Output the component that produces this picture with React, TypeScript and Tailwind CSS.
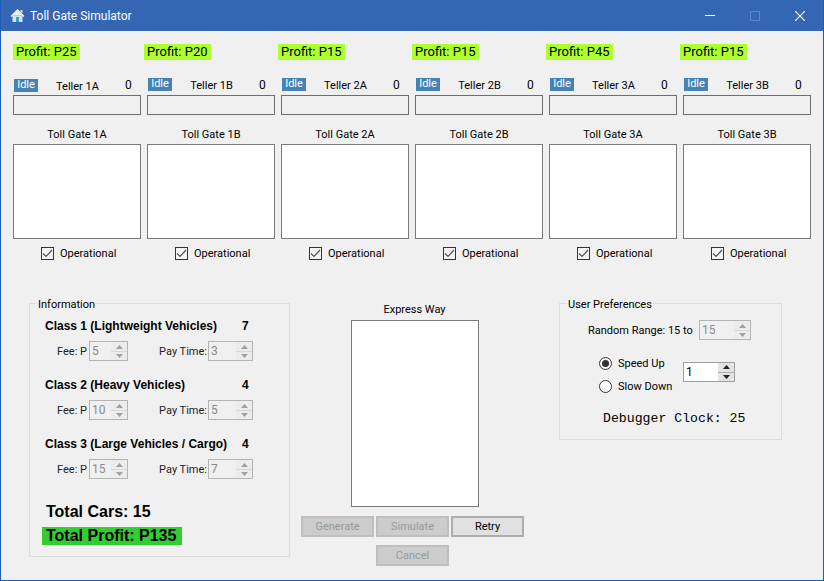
import React from "react";

const ui = "font-['Roboto','Noto_Sans',sans-serif]";

function Spinner({ value, width, enabled = false }: { value: string; width: string; enabled?: boolean }) {
  return (
    <div className={`flex h-[20px] ${width} border ${enabled ? "border-[#a0a0a0] bg-white text-black" : "border-[#b4b4b4] bg-[#f0f0f0] text-[#8a8a8a]"} text-[12px] leading-[18px]`}>
      <div className="flex-1 pl-[2px]">{value}</div>
      <div className="flex w-[16px] flex-col">
        <div className={`flex h-[9px] items-center justify-center ${enabled ? "bg-[#e4e4e4]" : "bg-[#ececec]"}`}>
          <svg width="7" height="4" viewBox="0 0 7 4"><path d="M3.5 0L7 4H0z" fill={enabled ? "#222" : "#a0a0a0"} /></svg>
        </div>
        <div className={`h-[1px] ${enabled ? "bg-[#b0b0b0]" : "bg-[#d8d8d8]"}`} />
        <div className={`flex h-[8px] items-center justify-center ${enabled ? "bg-[#e4e4e4]" : "bg-[#ececec]"}`}>
          <svg width="7" height="4" viewBox="0 0 7 4"><path d="M0 0H7L3.5 4z" fill={enabled ? "#222" : "#a0a0a0"} /></svg>
        </div>
      </div>
    </div>
  );
}

function Gate({ name, teller, profit, offset }: { name: string; teller: string; profit: string; offset: boolean }) {
  return (
    <div className="flex w-[128px] flex-col">
      <div className={`flex h-[16px] w-[67px] items-center whitespace-nowrap bg-[#adff2f] pl-[3px] text-[13px] text-black ${offset ? "ml-[-3px]" : ""}`}>
        Profit: {profit}
      </div>
      <div className={`flex h-[17px] items-center ${offset ? "mt-[18px]" : "mt-[19px]"}`}>
        <div className="ml-[1px] -mt-[4px] flex h-[13px] w-[24px] items-center justify-center bg-[#4682b4] text-[11px] text-white">Idle</div>
        <div className="flex-1 pr-[8px] text-center text-[11px] text-black">{teller}</div>
        <div className={`w-[16px] text-[12px] text-black ${offset ? "-mt-[4px]" : "-mt-[6px]"}`}>0</div>
      </div>
      <div className={`h-[20px] border border-[#6e6e6e] ${offset ? "mt-[0px]" : "mt-[-1px]"}`} />
      <div className="mt-[12px] text-center text-[11px] leading-[16px] text-black">{name}</div>
      <div className="mt-[1px] h-[95px] border border-[#7a7a7a] bg-white" />
      <div className="mt-[6px] flex h-[16px] items-center pl-[28px] text-[11px] text-black">
        <div className="flex h-[13px] w-[13px] items-center justify-center border border-[#333] bg-[#f4f4f4]">
          <svg width="11" height="9" viewBox="0 0 11 9"><path d="M1 4.5L4 7.5L10 1" fill="none" stroke="#555" strokeWidth="1.2" /></svg>
        </div>
        <span className="ml-[6px] pt-[2px]">Operational</span>
      </div>
    </div>
  );
}

function ClassBlock({ title, count, fee, time, top }: { title: string; count: string; fee: string; time: string; top: string }) {
  return (
    <div className={top}>
      <div className="flex h-[16px] items-center pl-[15px] font-['Liberation_Sans',sans-serif] text-[12px] font-bold text-black">
        <span className="w-[197px] whitespace-nowrap">{title}</span>
        <span>{count}</span>
      </div>
      <div className="mt-[7px] flex items-center text-[11px] text-[#222]">
        <span className="w-[59px] pr-[2px] pt-[2px] text-right">Fee: P</span>
        <Spinner value={fee} width="w-[39px]" />
        <span className="w-[80px] pr-[1px] pt-[2px] text-right">Pay Time:</span>
        <Spinner value={time} width="w-[45px]" />
      </div>
    </div>
  );
}

function Btn({ label, enabled = false }: { label: string; enabled?: boolean }) {
  return (
    <div className={`flex h-[21px] w-[73px] items-center justify-center border-2 pt-[2px] text-[11px] ${enabled ? "border-[#adadad] bg-[#e1e1e1] text-black" : "border-[#bfbfbf] bg-[#cccccc] text-[#9a9a9a]"}`}>
      {label}
    </div>
  );
}

const gates = [
  ["Toll Gate 1A", "Teller 1A", "P25"],
  ["Toll Gate 1B", "Teller 1B", "P20"],
  ["Toll Gate 2A", "Teller 2A", "P15"],
  ["Toll Gate 2B", "Teller 2B", "P15"],
  ["Toll Gate 3A", "Teller 3A", "P45"],
  ["Toll Gate 3B", "Teller 3B", "P15"],
];

export default function App() {
  return (
    <div className={`flex h-[581px] w-[824px] flex-col overflow-hidden border border-t-0 border-[#1d5cb4] bg-[#f0f0f0] ${ui}`}>
      <div className="flex h-[31px] shrink-0 items-center bg-[#3566b3] text-white">
        <svg className="ml-[9px]" width="15" height="15" viewBox="0 0 15 15">
          <path d="M2.5 7.5h10V14h-10z" fill="#cfe3f1" />
          <path d="M6 9h3v5H6z" fill="#3aa0cc" />
          <path d="M7.5 1L0.5 8l1.2 1L7.5 3.5 13.3 9l1.2-1z" fill="#f4f1e6" />
          <path d="M7.5 2.5L2.5 7.5h10z" fill="#e9eef0" />
          <path d="M10.5 2h2v3.5l-2-2z" fill="#e0d8c4" />
        </svg>
        <span className="ml-[5px] text-[12px]">Toll Gate Simulator</span>
        <div className="ml-auto flex items-center">
          <div className="mr-[35px] h-[1px] w-[10px] bg-white" />
          <div className="mr-[35px] h-[10px] w-[10px] border border-[#5f87c6]" />
          <svg className="mr-[18px]" width="10" height="10" viewBox="0 0 10 10"><path d="M0 0L10 10M10 0L0 10" stroke="#fff" strokeWidth="1.1" /></svg>
        </div>
      </div>

      <div className="mt-[13px] flex gap-[6px] pl-[12px]">
        {gates.map((g, i) => (
          <Gate key={g[0]} name={g[0]} teller={g[1]} profit={g[2]} offset={i > 0} />
        ))}
      </div>

      <div className="mt-[42px] flex items-start pl-[28px]">
        <div className="relative h-[254px] w-[261px] border border-[#dcdcdc]">
          <span className="absolute left-[7px] top-[-7px] bg-[#f0f0f0] px-[1px] text-[11px] leading-[16px] text-black">Information</span>
          <ClassBlock top="mt-[14px]" title="Class 1 (Lightweight Vehicles)" count="7" fee="5" time="3" />
          <ClassBlock top="mt-[16px]" title="Class 2 (Heavy Vehicles)" count="4" fee="10" time="5" />
          <ClassBlock top="mt-[16px]" title="Class 3 (Large Vehicles / Cargo)" count="4" fee="15" time="7" />
          <div className="mt-[24px] pl-[16px] font-['Liberation_Sans',sans-serif] text-[16px] font-bold leading-[18px] text-black">Total Cars: 15</div>
          <div className="ml-[12px] mt-[6px] flex h-[18px] w-[140px] items-center bg-[#32cd32] pl-[4px] font-['Liberation_Sans',sans-serif] text-[16px] font-bold text-black">Total Profit: P135</div>
        </div>

        <div className="ml-[11px] flex w-[223px] flex-col items-center">
          <div className="ml-[4px] -mt-[1px] h-[16px] text-[11px] leading-[16px] text-black">Express Way</div>
          <div className="ml-[4px] mt-[2px] h-[187px] w-[128px] border border-[#7a7a7a] bg-white" />
          <div className="mt-[9px] flex gap-[2px]">
            <Btn label="Generate" />
            <Btn label="Simulate" />
            <Btn label="Retry" enabled />
          </div>
          <div className="mt-[8px]"><Btn label="Cancel" /></div>
        </div>

        <div className="relative ml-[35px] h-[137px] w-[223px] border border-[#dcdcdc] text-[11px] text-black">
          <span className="absolute left-[7px] top-[-7px] bg-[#f0f0f0] px-[1px] leading-[16px]">User Preferences</span>
          <div className="ml-[28px] mt-[16px] flex items-center">
            <span className="w-[111px] whitespace-nowrap pt-[2px]">Random Range: 15 to</span>
            <Spinner value="15" width="w-[52px]" />
          </div>
          <div className="ml-[39px] mt-[16px] flex items-center">
            <div className="flex w-[84px] flex-col gap-[9px]">
              <div className="flex h-[14px] items-center">
                <div className="flex h-[13px] w-[13px] items-center justify-center rounded-full border border-[#333] bg-white"><div className="h-[7px] w-[7px] rounded-full bg-[#333]" /></div>
                <span className="ml-[6px] pt-[2px]">Speed Up</span>
              </div>
              <div className="flex h-[14px] items-center">
                <div className="h-[13px] w-[13px] rounded-full border border-[#333] bg-white" />
                <span className="ml-[6px] pt-[2px]">Slow Down</span>
              </div>
            </div>
            <div className="-mt-[6px]"><Spinner value="1" width="w-[52px]" enabled /></div>
          </div>
          <div className="ml-[43px] mt-[18px] whitespace-nowrap font-['Liberation_Mono',monospace] text-[13.2px] leading-[16px] text-black">Debugger Clock: 25</div>
        </div>
      </div>
    </div>
  );
}
